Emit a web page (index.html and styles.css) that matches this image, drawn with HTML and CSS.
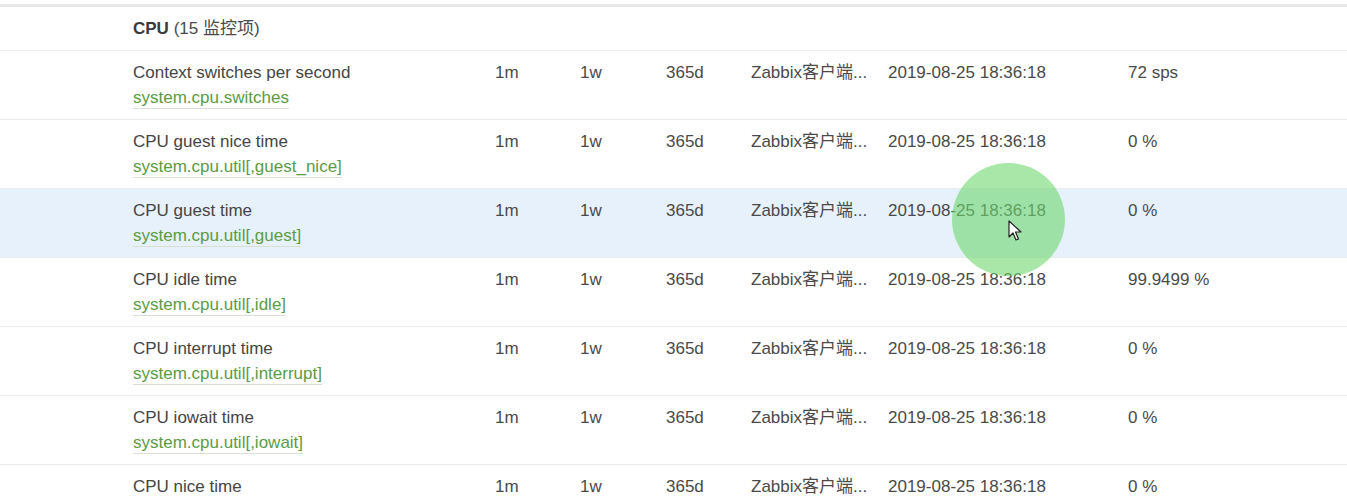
FILE: index.html
```html
<!DOCTYPE html>
<html lang="zh-CN">
<head>
    <meta charset="UTF-8">
    <meta name="viewport" content="width=device-width, initial-scale=1.0">
    <title>监控项</title>
    <link rel="stylesheet" href="styles.css">
</head>
<body>
    <div class="top-rule"></div>

    <table class="items">
        <colgroup>
            <col class="c-gap">
            <col class="c-name">
            <col class="c-interval">
            <col class="c-history">
            <col class="c-trends">
            <col class="c-type">
            <col class="c-date">
            <col class="c-value">
        </colgroup>
        <tbody>
            <tr class="app-row">
                <td></td>
                <td colspan="7"><span class="app-name">CPU</span> (15 监控项)</td>
            </tr>
            <tr>
                <td></td>
                <td><div class="item-name">Context switches per second</div><a class="item-key">system.cpu.switches</a></td>
                <td>1m</td><td>1w</td><td>365d</td>
                <td title="Zabbix客户端(主动式)">Zabbix客户端...</td>
                <td>2019-08-25 18:36:18</td>
                <td>72 sps</td>
            </tr>
            <tr>
                <td></td>
                <td><div class="item-name">CPU guest nice time</div><a class="item-key">system.cpu.util[,guest_nice]</a></td>
                <td>1m</td><td>1w</td><td>365d</td>
                <td title="Zabbix客户端(主动式)">Zabbix客户端...</td>
                <td>2019-08-25 18:36:18</td>
                <td>0 %</td>
            </tr>
            <tr class="hover">
                <td></td>
                <td><div class="item-name">CPU guest time</div><a class="item-key">system.cpu.util[,guest]</a></td>
                <td>1m</td><td>1w</td><td>365d</td>
                <td title="Zabbix客户端(主动式)">Zabbix客户端...</td>
                <td>2019-08-25 18:36:18</td>
                <td>0 %</td>
            </tr>
            <tr>
                <td></td>
                <td><div class="item-name">CPU idle time</div><a class="item-key">system.cpu.util[,idle]</a></td>
                <td>1m</td><td>1w</td><td>365d</td>
                <td title="Zabbix客户端(主动式)">Zabbix客户端...</td>
                <td>2019-08-25 18:36:18</td>
                <td>99.9499 %</td>
            </tr>
            <tr>
                <td></td>
                <td><div class="item-name">CPU interrupt time</div><a class="item-key">system.cpu.util[,interrupt]</a></td>
                <td>1m</td><td>1w</td><td>365d</td>
                <td title="Zabbix客户端(主动式)">Zabbix客户端...</td>
                <td>2019-08-25 18:36:18</td>
                <td>0 %</td>
            </tr>
            <tr>
                <td></td>
                <td><div class="item-name">CPU iowait time</div><a class="item-key">system.cpu.util[,iowait]</a></td>
                <td>1m</td><td>1w</td><td>365d</td>
                <td title="Zabbix客户端(主动式)">Zabbix客户端...</td>
                <td>2019-08-25 18:36:18</td>
                <td>0 %</td>
            </tr>
            <tr>
                <td></td>
                <td><div class="item-name">CPU nice time</div><a class="item-key">system.cpu.util[,nice]</a></td>
                <td>1m</td><td>1w</td><td>365d</td>
                <td title="Zabbix客户端(主动式)">Zabbix客户端...</td>
                <td>2019-08-25 18:36:18</td>
                <td>0 %</td>
            </tr>
        </tbody>
    </table>

    <!-- screen recorder click marker -->
    <div class="click-spot"></div>
    <svg class="cursor" width="14" height="22" viewBox="0 0 14 22">
        <path d="M1 1 L1 17 L5 13 L8 20 L10.5 19 L7.5 12 L13 12 Z" fill="#fff" stroke="#222" stroke-width="1.2" stroke-linejoin="round"/>
    </svg>
</body>
</html>
```

FILE: styles.css
```css
body {
    margin: 0;
    background-color: #ffffff;
    font-family: "Liberation Sans", Arial, "Noto Sans CJK SC", sans-serif;
    font-size: 17px;
    color: #4a4a4a;
    overflow: hidden;
    position: relative;
}
.top-rule {
    margin-top: 4px;
    height: 3px;
    background-color: #e8e8e8;
}
.items {
    width: 100%;
    border-collapse: collapse;
    table-layout: fixed;
}
.c-gap { width: 133px; }
.c-name { width: 362px; }
.c-interval { width: 85px; }
.c-history { width: 86px; }
.c-trends { width: 85px; }
.c-type { width: 137px; }
.c-date { width: 240px; }
.items td {
    padding: 9px 0 9px 0;
    line-height: 25px;
    vertical-align: top;
    border-bottom: 1px solid #ececec;
    white-space: nowrap;
}
.app-name {
    font-weight: bold;
    color: #3a3a3a;
}
.items tr.hover td {
    background-color: #e7f1fc;
}
.item-name {
    color: #454545;
}
.item-key {
    color: #5a9c45;
    border-bottom: 1px solid #d8dfd4;
    text-decoration: none;
    line-height: 21px;
    display: inline-block;
}
.click-spot {
    position: absolute;
    left: 952px;
    top: 163px;
    width: 113px;
    height: 113px;
    border-radius: 50%;
    background-color: rgba(110, 215, 110, 0.6);
}
.cursor {
    position: absolute;
    left: 1008px;
    top: 220px;
}
```
